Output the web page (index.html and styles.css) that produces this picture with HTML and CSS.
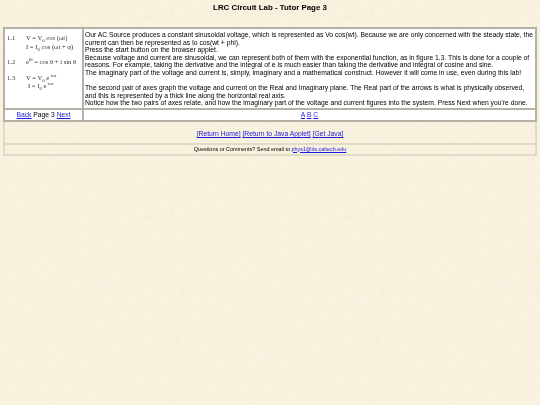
FILE: index.html
```html
<!DOCTYPE html>
<html>
<head>
    <meta charset="utf-8">
    <title>LRC Circuit Lab - Tutor Page 3</title>
    <link rel="stylesheet" href="styles.css">
</head>
<body>
    <h1>LRC Circuit Lab - Tutor Page 3</h1>
    <table class="outer">
        <tr>
            <td class="white eqs">
                <div class="eq">
                    <span class="num">1.1</span>
                    <span class="f">V = V<sub>0</sub> cos (ωt)<br>I = I<sub>0</sub> cos (ωt + φ)</span>
                </div>
                <div class="eq">
                    <span class="num">1.2</span>
                    <span class="f">e<sup>iθ</sup> = cos θ + i sin θ</span>
                </div>
                <div class="eq">
                    <span class="num">1.3</span>
                    <span class="f">V = V<sub>0</sub> e<sup> iωt</sup><br><span class="ind">I = I<sub>0</sub> e<sup> iωt</sup></span></span>
                </div>
            </td>
            <td class="white body-text">
                Our AC Source produces a constant sinusoidal voltage, which is represented as Vo cos(wt). Because we are only concerned with the steady state, the current can then be represented as Io cos(wt + phi).<br>
                Press the start button on the browser applet.<br>
                Because voltage and current are sinusoidal, we can represent both of them with the exponential function, as in figure 1.3. This is done for a couple of reasons. For example, taking the derivative and the integral of e is much easier than taking the derivative and integral of cosine and sine.<br>
                The imaginary part of the voltage and current is, simply, imaginary and a mathematical construct. However it will come in use, even during this lab!<br>
                <br>
                The second pair of axes graph the voltage and current on the Real and Imaginary plane. The Real part of the arrows is what is physically observed, and this is represented by a thick line along the horizontal real axis.<br>
                Notice how the two pairs of axes relate, and how the imaginary part of the voltage and current figures into the system. Press Next when you're done.
            </td>
        </tr>
        <tr>
            <td class="white center"><a href="#">Back</a> Page 3 <a href="#">Next</a></td>
            <td class="white center"><a href="#">A</a> <a href="#">B</a> <a href="#">C</a></td>
        </tr>
        <tr class="plain">
            <td colspan="2" class="center links"><a href="#">[Return Home]</a> <a href="#">[Return to Java Applet]</a> <a href="#">[Get Java]</a></td>
        </tr>
        <tr class="plain">
            <td colspan="2" class="center contact">Questions or Comments? Send email to <a href="#">phys1@its.caltech.edu</a></td>
        </tr>
    </table>
</body>
</html>
```
FILE: styles.css
```css
html, body {
    background-color: #faf3e1;
    background-image: url("data:image/svg+xml,%3Csvg xmlns='http://www.w3.org/2000/svg' width='200' height='200'%3E%3Cfilter id='p'%3E%3CfeTurbulence type='fractalNoise' baseFrequency='.2' numOctaves='3' stitchTiles='stitch'/%3E%3CfeColorMatrix values='0 0 0 0 .7 0 0 0 0 .6 0 0 0 0 .35 .12 .12 0 0 -.07'/%3E%3C/filter%3E%3Crect width='200' height='200' filter='url(%23p)'/%3E%3C/svg%3E");
}
body {
    margin: 0;
    padding: 3px 3px 0;
    min-height: 402px;
    font-family: "Liberation Sans", Arial, sans-serif;
    font-size: 6.75px;
    line-height: 7.6px;
    color: #000;
}

h1, .outer {
    filter: blur(.25px);
}

h1 {
    margin: 0 0 15px;
    font-size: 7.9px;
    line-height: 9px;
    text-align: center;
}

a {
    color: #1a1ae0;
}

.outer {
    width: 534px;
    border-collapse: collapse;
    border: 2px solid #b0aea0;
}
.outer td {
    padding: 1px;
    border: 2px solid #b4b2a5;
}

.white {
    background: #fff;
}
.center {
    text-align: center;
}

.eqs {
    width: 74px;
    padding: 2px 1px 0 2px !important;
    font-family: "Liberation Serif", serif;
    font-size: 6.6px;
    color: #333;
    vertical-align: top;
}
.eq {
    display: flex;
    gap: 10px;
    margin-top: 3px;
    margin-bottom: 7px;
    line-height: 8.5px;
}
.num {
    flex: 0 0 9px;
}
.f {
    white-space: nowrap;
}
.ind {
    margin-left: 2px;
}
sub, sup {
    font-size: 4.8px;
    line-height: 0;
}

.body-text {
    padding-top: 2px !important;
    vertical-align: top;
}

.links {
    height: 15px;
    padding-top: 5px !important;
}
.contact {
    font-size: 5.45px;
    height: 6px;
}
.plain td {
    border-color: #e0dac8;
}
.plain:nth-child(3) td {
    border-top-color: #b4b2a5;
}
```
